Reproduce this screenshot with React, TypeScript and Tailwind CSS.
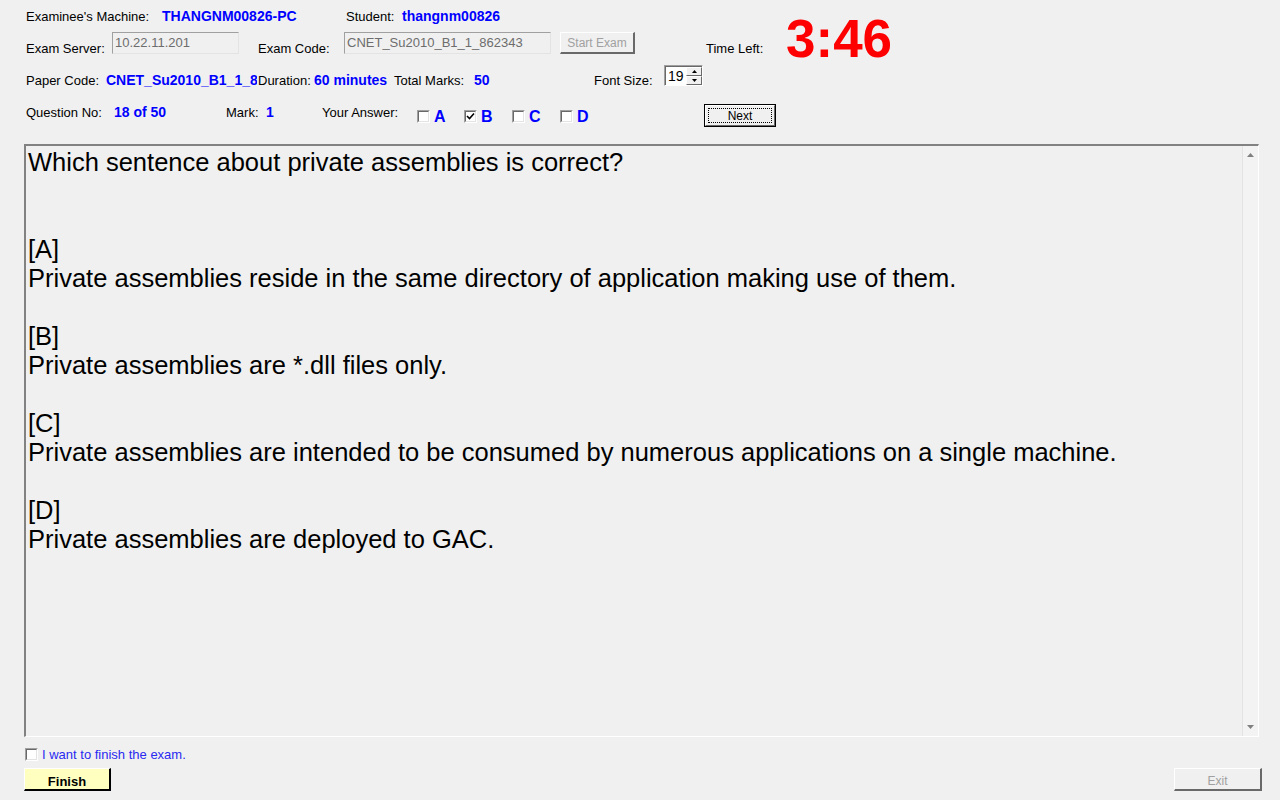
import React from "react";

const label = "text-[13px] leading-[15px] text-black whitespace-nowrap";
const value = "text-[14px] leading-[15px] font-bold text-[#0000ff] whitespace-nowrap";

function CheckBox({ checked }: { checked?: boolean }) {
  return (
    <div className="w-[13px] h-[13px] border-t border-l border-[#a0a0a0] border-r border-b border-r-white border-b-white bg-white flex">
      <div className="flex-1 border-t border-l border-[#696969] border-r border-b border-r-[#e3e3e3] border-b-[#e3e3e3] flex items-center justify-center">
        {checked && (
          <svg width="9" height="9" viewBox="0 0 9 9">
            <path d="M1 4 L3.5 6.5 L8 1.5" stroke="#000" strokeWidth="1.6" fill="none" />
          </svg>
        )}
      </div>
    </div>
  );
}

function TextBox({ text, w }: { text: string; w: string }) {
  return (
    <div
      className={`${w} h-[22px] border-t border-l border-[#a0a0a0] border-r border-b border-r-[#e3e3e3] border-b-[#e3e3e3] bg-[#f0f0f0] flex items-center pl-[2px] text-[13px] text-[#6d6d6d] whitespace-nowrap overflow-hidden`}
    >
      {text}
    </div>
  );
}

function Answer({ letter, checked, w }: { letter: string; checked?: boolean; w: string }) {
  return (
    <div className={`${w} flex items-center h-[23px] pt-[1px]`}>
      <CheckBox checked={checked} />
      <span className="ml-[4px] text-[16px] leading-[16px] font-bold text-[#0000ff] mt-[2px]">{letter}</span>
    </div>
  );
}

export default function App() {
  const lines = [
    "Which sentence about private assemblies is correct?",
    "",
    "",
    "[A]",
    "Private assemblies reside in the same directory of application making use of them.",
    "",
    "[B]",
    "Private assemblies are *.dll files only.",
    "",
    "[C]",
    "Private assemblies are intended to be consumed by numerous applications on a single machine.",
    "",
    "[D]",
    "Private assemblies are deployed to GAC.",
  ];

  return (
    <div className="w-[1280px] h-[800px] bg-[#f0f0f0] overflow-hidden font-['Liberation_Sans',Arial,sans-serif]">
      {/* top: machine, server, timer */}
      <div className="flex h-[65px]">
        <div className="w-[680px]">
          <div className="h-[32px] flex items-center pl-[26px]">
            <span className={`${label} w-[136px]`}>Examinee's Machine:</span>
            <span className={`${value} w-[184px]`}>THANGNM00826-PC</span>
            <span className={`${label} w-[56px]`}>Student:</span>
            <span className={value}>thangnm00826</span>
          </div>
          <div className="h-[22px] flex items-start pl-[26px]">
            <span className={`${label} w-[86px] mt-[9px]`}>Exam Server:</span>
            <TextBox text="10.22.11.201" w="w-[127px]" />
            <span className={`${label} w-[86px] ml-[19px] mt-[9px]`}>Exam Code:</span>
            <TextBox text="CNET_Su2010_B1_1_862343" w="w-[207px]" />
            <button className="ml-[9px] w-[75px] h-[22px] border-t border-l border-white border-r-2 border-b-2 border-r-[#696969] border-b-[#696969] bg-[#f0f0f0] text-[12px] text-[#a0a0a0]">
              Start Exam
            </button>
          </div>
        </div>
        <span className={`${label} ml-[26px] mt-[41px] w-[80px]`}>Time Left:</span>
        <span className="mt-[12px] text-[53px] leading-[54px] font-bold text-[#ff0000]">3:46</span>
      </div>

      {/* paper code row */}
      <div className="h-[23px] flex items-end pl-[26px]">
        <span className={`${label} w-[80px]`}>Paper Code:</span>
        <span className={`${value} w-[151px] mr-[1px] overflow-hidden`}>CNET_Su2010_B1_1_862343</span>
        <span className={`${label} w-[56px]`}>Duration:</span>
        <span className={`${value} w-[80px]`}>60 minutes</span>
        <span className={`${label} w-[80px]`}>Total Marks:</span>
        <span className={`${value} w-[120px]`}>50</span>
        <span className={`${label} w-[70px]`}>Font Size:</span>
        <div className="self-start w-[39px] h-[21px] border-t border-l border-[#a0a0a0] border-r border-b border-r-white border-b-white bg-white flex">
          <div className="flex-1 border-t border-l border-[#696969] flex items-center pl-[2px] text-[14px] leading-[15px]">19</div>
          <div className="w-[16px] flex flex-col border-t border-[#696969]">
            <div className="flex-1 bg-[#f0f0f0] border-t border-l border-white border-r border-b border-r-[#696969] border-b-[#696969] flex items-center justify-center">
              <svg width="5" height="3" viewBox="0 0 5 3"><path d="M2.5 0 L5 3 L0 3 Z" fill="#000" /></svg>
            </div>
            <div className="flex-1 bg-[#f0f0f0] border-t border-l border-white border-r border-b border-r-[#696969] border-b-[#696969] flex items-center justify-center">
              <svg width="5" height="3" viewBox="0 0 5 3"><path d="M0 0 L5 0 L2.5 3 Z" fill="#000" /></svg>
            </div>
          </div>
        </div>
      </div>

      {/* question row */}
      <div className="mt-[16px] h-[23px] flex items-start pl-[26px]">
        <span className={`${label} w-[88px] mt-[1px]`}>Question No:</span>
        <span className={`${value} w-[112px] mt-[1px]`}>18 of 50</span>
        <span className={`${label} w-[40px] mt-[1px]`}>Mark:</span>
        <span className={`${value} w-[56px] mt-[1px]`}>1</span>
        <span className={`${label} w-[95px] mt-[1px]`}>Your Answer:</span>
        <Answer letter="A" w="w-[47px]" />
        <Answer letter="B" w="w-[48px]" checked />
        <Answer letter="C" w="w-[48px]" />
        <Answer letter="D" w="w-[144px]" />
        <button className="w-[72px] h-[23px] border border-black bg-[#f0f0f0] flex">
          <div className="flex-1 border-t border-l border-white border-r border-b border-r-[#696969] border-b-[#696969] p-[2px] flex">
            <div className="flex-1 border border-dotted border-black flex items-center justify-center text-[12px] leading-[12px]">
              Next
            </div>
          </div>
        </button>
      </div>

      {/* question content */}
      <div className="mt-[17px] ml-[24px] w-[1235px] h-[593px] border-t-2 border-l-2 border-t-[#828282] border-l-[#828282] border-b border-r border-b-white border-r-white flex">
        <div className="flex-1 pl-[2px] pt-[2px] text-[25.5px] leading-[29px] text-black whitespace-pre">
          {lines.map((l, i) => (
            <div key={i} className="h-[29px]">
              {l}
            </div>
          ))}
        </div>
        <div className="w-[16px] border-l border-[#e3e3e3] bg-[#f3f3f3] flex flex-col justify-between items-center py-[7px]">
          <svg width="7" height="4" viewBox="0 0 7 4"><path d="M3.5 0 L7 4 L0 4 Z" fill="#808080" /></svg>
          <svg width="7" height="4" viewBox="0 0 7 4"><path d="M0 0 L7 0 L3.5 4 Z" fill="#808080" /></svg>
        </div>
      </div>

      {/* finish checkbox */}
      <div className="mt-[11px] ml-[25px] flex items-center h-[13px]">
        <CheckBox />
        <span className="ml-[4px] text-[13px] leading-[15px] text-[#2a2af0]">I want to finish the exam.</span>
      </div>

      {/* buttons */}
      <div className="mt-[7px] flex justify-between pl-[24px] pr-[18px]">
        <button className="w-[87px] h-[23px] pt-[3px] bg-[#ffffc0] border-t border-l border-white border-r-2 border-b-2 border-r-black border-b-black text-[13px] font-bold text-black">
          Finish
        </button>
        <button className="w-[88px] h-[23px] pt-[3px] bg-[#f0f0f0] border-t border-l border-white border-r-2 border-b-2 border-r-[#696969] border-b-[#696969] text-[12px] text-[#a0a0a0]">
          Exit
        </button>
      </div>
    </div>
  );
}
